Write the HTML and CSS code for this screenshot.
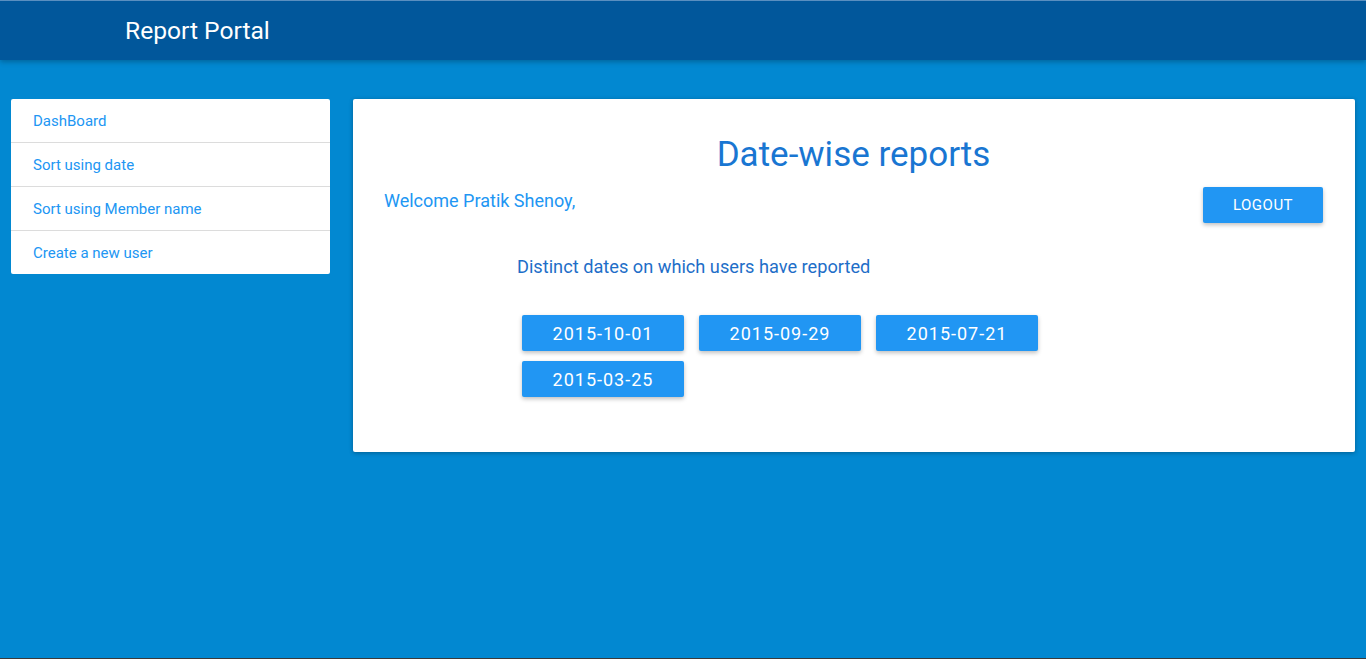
FILE: index.html
```html
<!DOCTYPE html>
<html>
<head>
<meta charset="utf-8">
<title>Report Portal</title>
<link rel="stylesheet" href="styles.css">
</head>
<body>
<header class="topbar">
  <div class="brand">Report Portal</div>
</header>
<div class="layout">
  <nav class="sidenav">
    <a class="nav-item" href="#">DashBoard</a>
    <a class="nav-item" href="#">Sort using date</a>
    <a class="nav-item" href="#">Sort using Member name</a>
    <a class="nav-item" href="#">Create a new user</a>
  </nav>
  <main class="card">
    <h1 class="title">Date-wise reports</h1>
    <div class="welcome-row">
      <span class="welcome">Welcome Pratik Shenoy,</span>
      <button class="btn logout">LOGOUT</button>
    </div>
    <div class="dates">
      <p class="dates-label">Distinct dates on which users have reported</p>
      <div class="date-grid">
        <button class="btn date">2015-10-01</button>
        <button class="btn date">2015-09-29</button>
        <button class="btn date">2015-07-21</button>
        <button class="btn date">2015-03-25</button>
      </div>
    </div>
  </main>
</div>
</body>
</html>
```
FILE: styles.css
```css
html, body {
  margin: 0;
  padding: 0;
  height: 100%;
}
body {
  background: #0288d1;
  font-family: Roboto, "Liberation Sans", sans-serif;
  border-top: 1px solid #5a8fc0;
  border-bottom: 1px solid #3a3a3a;
  box-sizing: border-box;
  min-height: 659px;
}
.topbar {
  height: 59px;
  background: #01579b;
  box-shadow: 0 2px 5px rgba(0,0,0,0.25);
  display: flex;
  align-items: center;
  padding-left: 125px;
}
.brand {
  color: #fff;
  font-size: 24.6px;
  font-weight: 400;
  margin-top: 0;
}
.layout {
  display: flex;
  align-items: flex-start;
  gap: 23px;
  padding: 39px 11px 0 11px;
}
.sidenav {
  width: 319px;
  flex: none;
  background: #fff;
  border-radius: 2px;
  display: flex;
  flex-direction: column;
}
.nav-item {
  display: block;
  height: 43px;
  line-height: 44px;
  padding-left: 22px;
  color: #2196f3;
  font-size: 15px;
  text-decoration: none;
  border-bottom: 1px solid #dcdcdc;
}
.nav-item:last-child {
  border-bottom: none;
}
.card {
  flex: 1;
  background: #fff;
  border-radius: 2px;
  box-shadow: 0 1px 4px rgba(0,0,0,0.3);
  height: 353px;
  box-sizing: border-box;
  padding: 32px 32px 0 31px;
}
.title {
  margin: 0;
  text-align: center;
  color: #1976d2;
  font-weight: 400;
  font-size: 35px;
  line-height: 48px;
}
.welcome-row {
  display: flex;
  justify-content: space-between;
  align-items: flex-start;
  margin-top: 8px;
}
.welcome {
  color: #2196f3;
  font-size: 18px;
  line-height: 24px;
  margin-top: 2px;
}
.btn {
  border: none;
  border-radius: 2px;
  background: #2196f3;
  color: #fff;
  font-family: Roboto, "Liberation Sans", sans-serif;
  cursor: pointer;
  box-shadow: 0 2px 4px rgba(0,0,0,0.25);
}
.logout {
  width: 120px;
  height: 36px;
  font-size: 15px;
  letter-spacing: 0.5px;
}
.dates {
  padding-left: 133px;
}
.dates-label {
  margin: 32px 0 0 0;
  color: #1e6ec8;
  font-size: 18.2px;
  line-height: 24px;
}
.date-grid {
  display: grid;
  grid-template-columns: repeat(3, 162px);
  column-gap: 15px;
  row-gap: 10px;
  margin-top: 36px;
  padding-left: 5px;
}
.date {
  height: 36px;
  font-size: 18px;
  letter-spacing: 1px;
}
```
